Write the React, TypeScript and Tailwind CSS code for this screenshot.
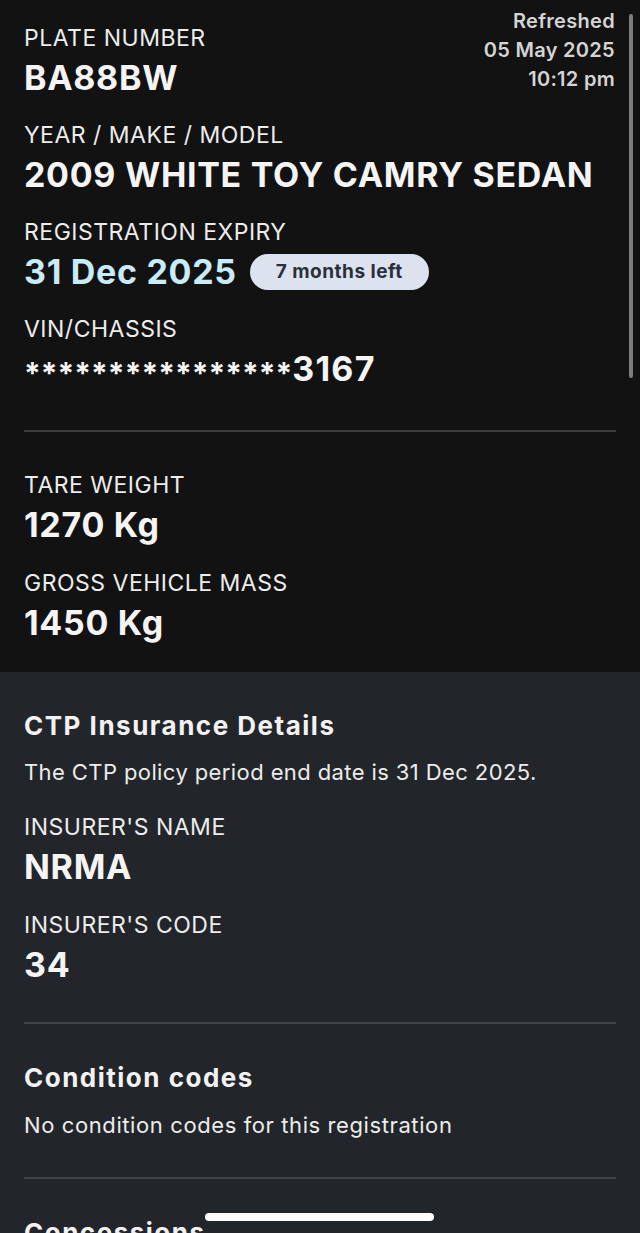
import React from "react";

const FONT = { fontFamily: "Inter, 'Noto Sans', 'Liberation Sans', sans-serif" };

function Field({ label, value, className = "" }: { label: string; value: React.ReactNode; className?: string }) {
  return (
    <div className={className}>
      <div className="text-[23px] leading-[32px] font-normal tracking-[0.5px] text-[#ececec]">{label}</div>
      <div className="text-[34px] leading-[48px] font-bold tracking-[0.7px] text-[#f4f4f4]">{value}</div>
    </div>
  );
}

export default function App() {
  return (
    <div className="relative w-[640px] h-[1233px] overflow-hidden bg-[#22262a]" style={FONT}>
      <section className="bg-[#121212] px-6 pt-[22px] pb-[25px]">
        <div className="flex items-start justify-between">
          <Field label="PLATE NUMBER" value="BA88BW" />
          <div className="-mt-[15px] mr-px text-right text-[20px] leading-[29px] font-semibold tracking-[0.3px] text-[#d4d4d4]">
            <div>Refreshed</div>
            <div>05 May 2025</div>
            <div>10:12 pm</div>
          </div>
        </div>
        <Field className="mt-[17px]" label="YEAR / MAKE / MODEL" value="2009 WHITE TOY CAMRY SEDAN" />
        <div className="mt-[17px]">
          <div className="text-[23px] leading-[32px] font-normal tracking-[0.5px] text-[#ececec]">REGISTRATION EXPIRY</div>
          <div className="flex items-center h-[48px]">
            <span className="text-[34px] leading-[48px] font-bold tracking-[0.7px] text-[#c8ebf8]">31 Dec 2025</span>
            <span className="ml-[13px] h-[36px] px-[26px] flex items-center rounded-full bg-[#dde2ef] text-[19px] font-bold tracking-[0.5px] text-[#2b2f3b]">
              7 months left
            </span>
          </div>
        </div>
        <Field
          className="mt-[17px]"
          label="VIN/CHASSIS"
          value={
            <span>
              <span className="inline-block translate-y-[3px] text-[30px] tracking-normal">****************</span>
              <span className="tracking-[1.2px]">3167</span>
            </span>
          }
        />
        <div className="mt-[36px] h-[2px] bg-[#3e3e3e]" />
        <Field className="mt-[37px]" label="TARE WEIGHT" value="1270 Kg" />
        <Field className="mt-[18px]" label="GROSS VEHICLE MASS" value="1450 Kg" />
      </section>

      <section className="px-6 pt-[36px]">
        <h2 className="text-[26px] leading-[36px] font-bold tracking-[1.5px] text-[#f2f2f2]">CTP Insurance Details</h2>
        <p className="mt-[13px] text-[22px] leading-[30px] tracking-[0.4px] text-[#ececec]">
          The CTP policy period end date is 31 Dec 2025.
        </p>
        <Field className="mt-[24px]" label="INSURER'S NAME" value="NRMA" />
        <Field className="mt-[18px]" label="INSURER'S CODE" value="34" />
        <div className="mt-[33px] h-[2px] bg-[#3f4347]" />
        <h2 className="mt-[36px] text-[26px] leading-[36px] font-bold tracking-[1.5px] text-[#f2f2f2]">Condition codes</h2>
        <p className="mt-[14px] text-[22px] leading-[30px] tracking-[0.6px] text-[#ececec]">
          No condition codes for this registration
        </p>
        <div className="mt-[37px] h-[2px] bg-[#3f4347]" />
        <h2 className="mt-[36px] text-[26px] leading-[36px] font-bold tracking-[1.5px] text-[#f2f2f2]">Concessions</h2>
      </section>

      <div className="absolute right-[7px] top-[14px] w-[4px] h-[364px] rounded-full bg-[#7d7d7d]" />
      <div className="absolute bottom-[12px] left-[205px] w-[229px] h-[8px] rounded-full bg-white" />
    </div>
  );
}
